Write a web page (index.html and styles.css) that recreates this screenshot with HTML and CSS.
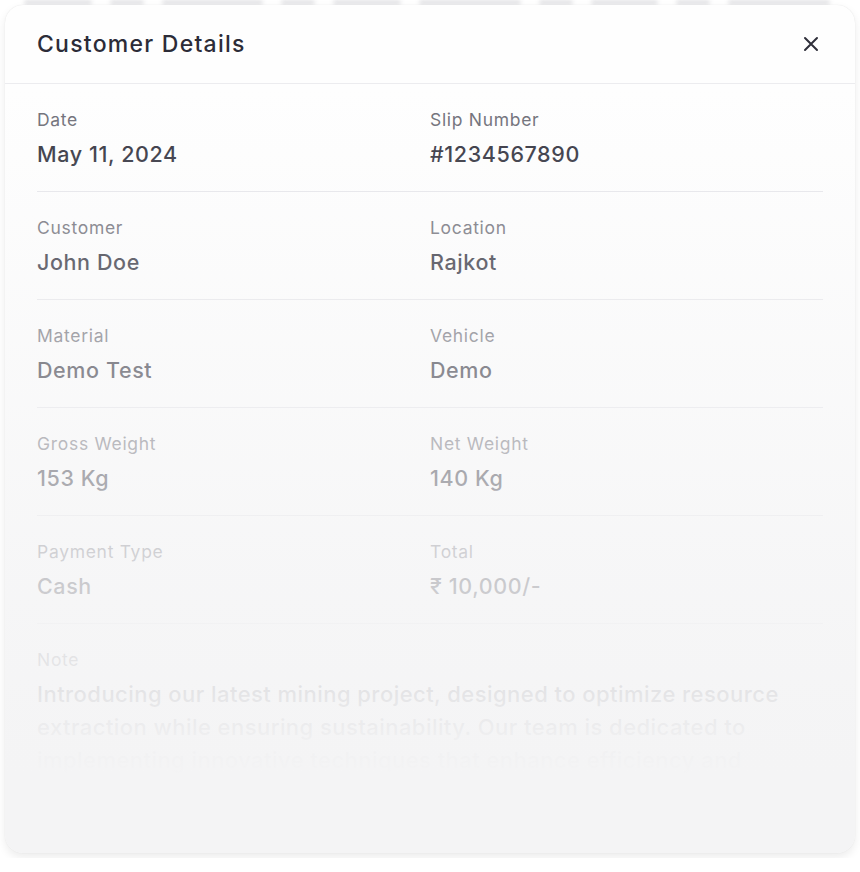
FILE: index.html
```html
<!DOCTYPE html>
<html lang="en">
<head>
  <meta charset="UTF-8" />
  <meta name="viewport" content="width=device-width, initial-scale=1.0"/>
  <title>Customer Details</title>
  <link rel="stylesheet" href="styles.css">
</head>
<body>

  <!-- blurred page content peeking out above the card -->
  <div class="backdrop">
    <span class="w2"></span><span></span><span class="w3"></span><span></span><span class="w2"></span>
    <span class="w3"></span><span></span><span class="w2"></span><span></span><span class="w3"></span>
  </div>

  <div class="modal">
    <div class="modal-header">
      <h2>Customer Details</h2>
      <button class="close-btn" aria-label="Close">
        <svg width="16" height="16" viewBox="0 0 16 16" fill="none">
          <path d="M2 2L14 14M14 2L2 14" stroke="#2f2f3a" stroke-width="2" stroke-linecap="round"/>
        </svg>
      </button>
    </div>

    <div class="modal-body">
      <div class="row">
        <div class="field">
          <span class="label">Date</span>
          <span class="value">May 11, 2024</span>
        </div>
        <div class="field">
          <span class="label">Slip Number</span>
          <span class="value">#1234567890</span>
        </div>
      </div>
      <div class="row">
        <div class="field">
          <span class="label">Customer</span>
          <span class="value">John Doe</span>
        </div>
        <div class="field">
          <span class="label">Location</span>
          <span class="value">Rajkot</span>
        </div>
      </div>
      <div class="row">
        <div class="field">
          <span class="label">Material</span>
          <span class="value">Demo Test</span>
        </div>
        <div class="field">
          <span class="label">Vehicle</span>
          <span class="value">Demo</span>
        </div>
      </div>
      <div class="row">
        <div class="field">
          <span class="label">Gross Weight</span>
          <span class="value">153 Kg</span>
        </div>
        <div class="field">
          <span class="label">Net Weight</span>
          <span class="value">140 Kg</span>
        </div>
      </div>
      <div class="row">
        <div class="field">
          <span class="label">Payment Type</span>
          <span class="value">Cash</span>
        </div>
        <div class="field">
          <span class="label">Total</span>
          <span class="value">₹ 10,000/-</span>
        </div>
      </div>
      <div class="note">
        <span class="label">Note</span>
        <p class="note-text">Introducing our latest mining project, designed to optimize resource extraction while ensuring sustainability. Our team is dedicated to implementing innovative techniques that enhance efficiency and</p>
      </div>
    </div>

    <!-- fade over the lower part of the card -->
    <div class="fade"></div>
  </div>

</body>
</html>
```

FILE: styles.css
```css
body {
  font-family: Inter, 'Noto Sans', sans-serif;
  margin: 0;
  padding: 5px;
  background: #ffffff;
  position: relative;
}

.backdrop {
  position: absolute;
  top: 0;
  left: 24px;
  right: 30px;
  height: 6px;
  display: flex;
  gap: 18px;
  filter: blur(2px);
}

.backdrop span {
  flex: 1;
  height: 5px;
  border-radius: 3px;
  background: #e2e2e5;
}

.backdrop .w2 {
  flex: 2;
}

.backdrop .w3 {
  flex: 3;
}

.modal {
  position: relative;
  height: 848px;
  background: #fefefe;
  border-radius: 18px;
  box-shadow: 0 4px 10px rgba(0, 0, 0, 0.08), 0 0 1px rgba(0, 0, 0, 0.12);
  overflow: hidden;
}

.modal-header {
  display: flex;
  align-items: center;
  justify-content: space-between;
  height: 78px;
  padding: 0 32px;
  border-bottom: 1px solid #ececef;
}

.modal-header h2 {
  margin: 0;
  font-size: 23px;
  font-weight: 500;
  letter-spacing: 1.25px;
  color: #2c2c38;
}

.close-btn {
  background: none;
  border: none;
  padding: 0;
  width: 16px;
  height: 16px;
  margin-right: 4px;
  cursor: pointer;
}

.modal-body {
  padding: 0 32px;
}

.row {
  display: grid;
  grid-template-columns: 1fr 1fr;
  padding: 24px 0 23px;
  border-bottom: 1px solid #e6e6ea;
}

.field {
  display: flex;
  flex-direction: column;
  gap: 8px;
}

.label {
  font-size: 17.5px;
  line-height: 24px;
  letter-spacing: 0.7px;
  color: #6f6f78;
}

.value {
  font-size: 21.5px;
  line-height: 28px;
  font-weight: 500;
  letter-spacing: 0.6px;
  color: #32323e;
}

.note {
  display: flex;
  flex-direction: column;
  gap: 6px;
  padding-top: 24px;
}

.note-text {
  margin: 0;
  font-size: 22px;
  line-height: 33px;
  font-weight: 500;
  letter-spacing: 0.45px;
  color: #32323e;
}

.fade {
  position: absolute;
  inset: 0;
  pointer-events: none;
  background: linear-gradient(to bottom,
    rgba(244, 244, 245, 0) 10%,
    rgba(244, 244, 245, 0.45) 43%,
    rgba(244, 244, 245, 0.78) 68%,
    rgba(244, 244, 245, 0.98) 87%,
    rgba(244, 244, 245, 1) 91%);
}
```
